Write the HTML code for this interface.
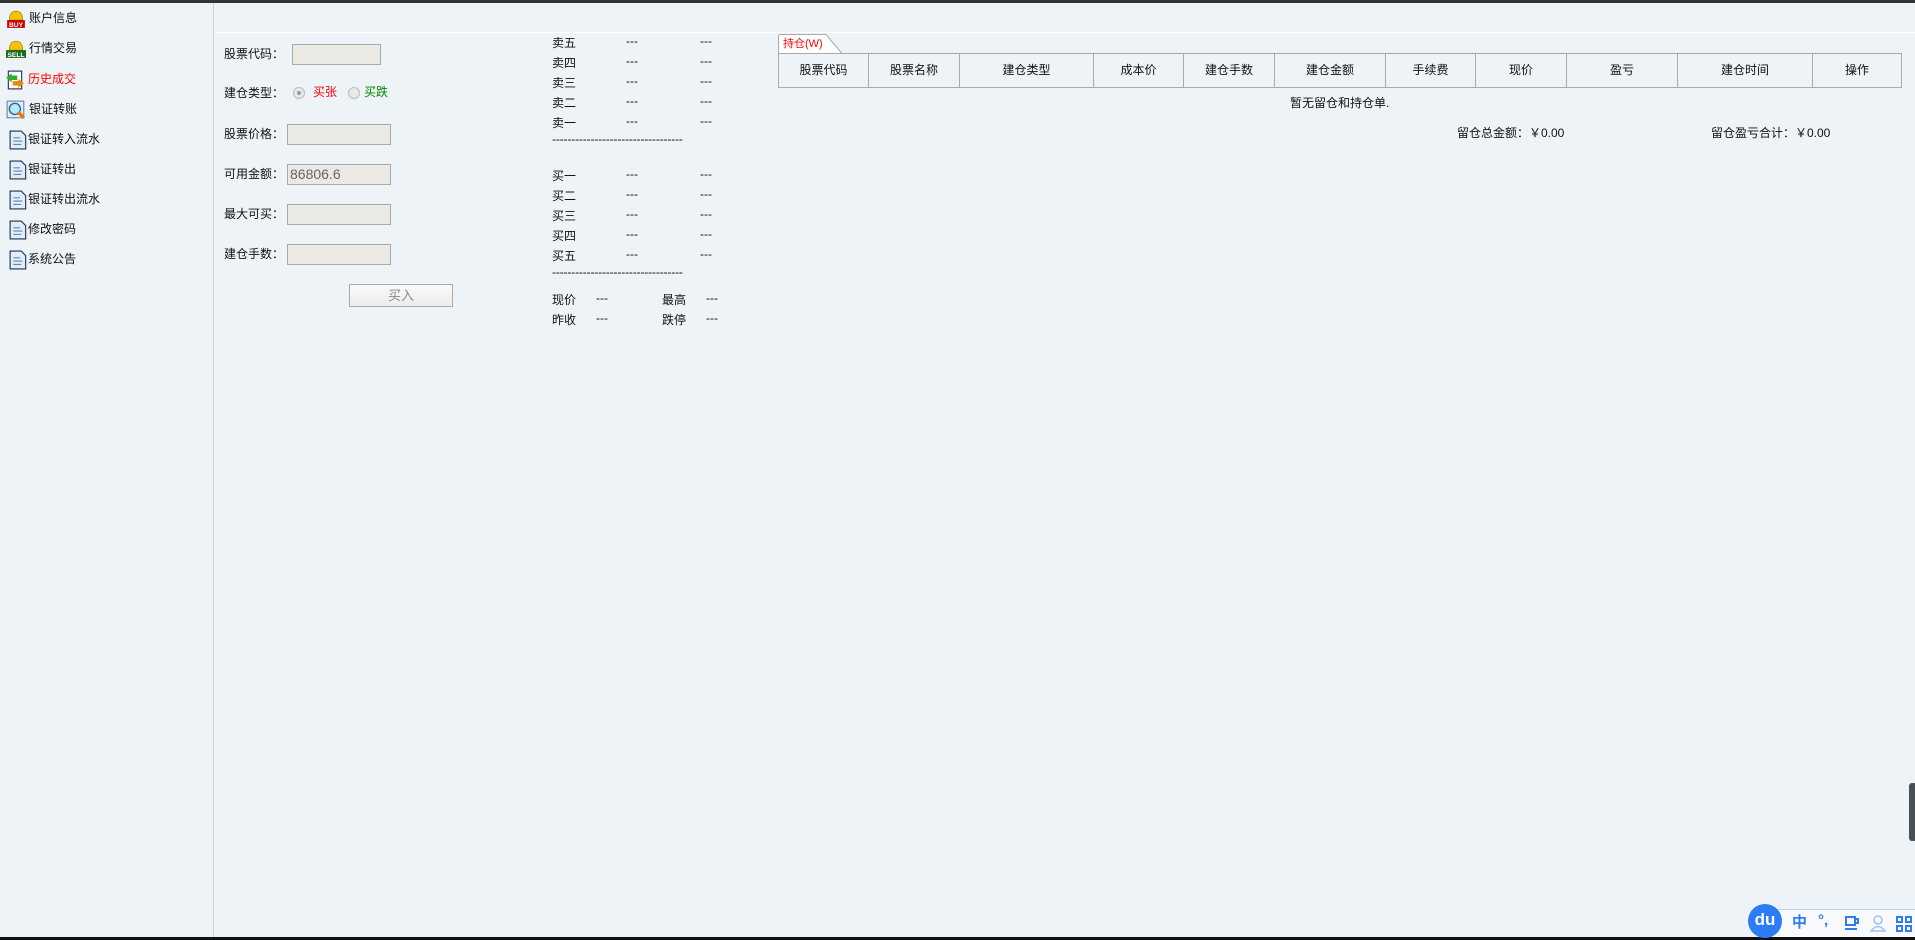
<!DOCTYPE html>
<html><head><meta charset="utf-8"><style>
*{margin:0;padding:0;box-sizing:border-box}
body{width:1915px;height:940px;background:#eef3f8;font-family:"Liberation Sans","Noto Sans CJK SC",sans-serif;font-size:12px;color:#111;position:relative;overflow:hidden}
.a{position:absolute;white-space:nowrap;line-height:14px}
.inp{position:absolute;background:#ebe9e4;border:1px solid #a9a9a9;height:21px;font-size:14px;color:#666;padding-left:2px;line-height:19px}
.th{position:absolute;top:53px;height:35px;border:1px solid #aaa;border-right:none;text-align:center;line-height:33px}
.ic{position:absolute;width:20px;height:20px}
</style></head><body>
<div class="a" style="left:0;top:0;width:1915px;height:3px;background:#333"></div>
<div class="a" style="left:0;top:937px;width:1915px;height:3px;background:#111"></div>
<div class="a" style="left:213px;top:3px;width:1px;height:934px;background:#cdd3da"></div>
<div class="a" style="left:214px;top:32px;width:1701px;height:1px;background:#fff"></div>

<!-- sidebar -->
<svg class="ic" style="left:6px;top:9px" viewBox="0 0 18 18"><path d="M3 10 Q3 2 9 2 Q15 2 15 10Z" fill="#f5c400" stroke="#a07800" stroke-width=".6"/><rect x="1" y="10" width="16" height="7" fill="#c00"/><text x="9" y="16" font-size="6" fill="#fff" text-anchor="middle" font-family="Liberation Sans" font-weight="bold">BUY</text></svg>
<div class="a" style="left:29px;top:11px">账户信息</div>
<svg class="ic" style="left:6px;top:39px" viewBox="0 0 18 18"><path d="M3 10 Q3 2 9 2 Q15 2 15 10Z" fill="#f5c400" stroke="#a07800" stroke-width=".6"/><rect x="0" y="10" width="18" height="7" fill="#1a6b1a"/><text x="9" y="16" font-size="6" fill="#fff" text-anchor="middle" font-family="Liberation Sans" font-weight="bold">SELL</text></svg>
<div class="a" style="left:29px;top:41px">行情交易</div>
<svg class="ic" style="left:5px;top:70px" viewBox="0 0 18 18"><rect x="3" y="1" width="12" height="16" fill="#fff" stroke="#235" /><path d="M1 7 L6 3 L6 5 L11 5 L11 9 L6 9 L6 11Z" fill="#3a3"/><path d="M17 12 L12 8 L12 10 L7 10 L7 14 L12 14 L12 16Z" fill="#e80"/></svg>
<div class="a" style="left:28px;top:72px;color:#f00">历史成交</div>
<svg class="ic" style="left:6px;top:100px" viewBox="0 0 18 18"><rect x="1" y="1" width="15" height="15" fill="#def" stroke="#68a"/><circle cx="8" cy="8" r="5" fill="#aef" stroke="#468" stroke-width="1.3"/><path d="M11 11 L16 16" stroke="#e70" stroke-width="3"/></svg>
<div class="a" style="left:29px;top:102px">银证转账</div>
<svg class="ic" style="left:9px;top:130px" viewBox="0 0 18 18"><path d="M1 1 H11 L15 5 V17 H1Z" fill="#dfeefc" stroke="#234"/><path d="M4 7h6M4 10h8M4 13h7" stroke="#68a"/></svg>
<div class="a" style="left:28px;top:132px">银证转入流水</div>
<svg class="ic" style="left:9px;top:160px" viewBox="0 0 18 18"><path d="M1 1 H11 L15 5 V17 H1Z" fill="#dfeefc" stroke="#234"/><path d="M4 7h6M4 10h8M4 13h7" stroke="#68a"/></svg>
<div class="a" style="left:28px;top:162px">银证转出</div>
<svg class="ic" style="left:9px;top:190px" viewBox="0 0 18 18"><path d="M1 1 H11 L15 5 V17 H1Z" fill="#dfeefc" stroke="#234"/><path d="M4 7h6M4 10h8M4 13h7" stroke="#68a"/></svg>
<div class="a" style="left:28px;top:192px">银证转出流水</div>
<svg class="ic" style="left:9px;top:220px" viewBox="0 0 18 18"><path d="M1 1 H11 L15 5 V17 H1Z" fill="#dfeefc" stroke="#234"/><path d="M4 7h6M4 10h8M4 13h7" stroke="#68a"/></svg>
<div class="a" style="left:28px;top:222px">修改密码</div>
<svg class="ic" style="left:9px;top:250px" viewBox="0 0 18 18"><path d="M1 1 H11 L15 5 V17 H1Z" fill="#dfeefc" stroke="#234"/><path d="M4 7h6M4 10h8M4 13h7" stroke="#68a"/></svg>
<div class="a" style="left:28px;top:252px">系统公告</div>

<!-- form -->
<div class="a" style="left:224px;top:47px">股票代码：</div>
<div class="inp" style="left:292px;top:44px;width:89px"></div>
<div class="a" style="left:224px;top:86px">建仓类型：</div>
<div class="a" style="left:293px;top:87px;width:12px;height:12px;border-radius:50%;border:1px solid #bbb;background:#e8e8e8"><div style="margin:3px;width:4px;height:4px;border-radius:50%;background:#999"></div></div>
<div class="a" style="left:313px;top:85px;color:#f00">买张</div>
<div class="a" style="left:348px;top:87px;width:12px;height:12px;border-radius:50%;border:1px solid #bbb;background:#e8e8e8"></div>
<div class="a" style="left:364px;top:85px;color:#080">买跌</div>
<div class="a" style="left:224px;top:127px">股票价格：</div>
<div class="inp" style="left:287px;top:124px;width:104px"></div>
<div class="a" style="left:224px;top:167px">可用金额：</div>
<div class="inp" style="left:287px;top:164px;width:104px">86806.6</div>
<div class="a" style="left:224px;top:207px">最大可买：</div>
<div class="inp" style="left:287px;top:204px;width:104px"></div>
<div class="a" style="left:224px;top:247px">建仓手数：</div>
<div class="inp" style="left:287px;top:244px;width:104px"></div>
<div class="a" style="left:349px;top:284px;width:104px;height:23px;border:1px solid #aaa;background:linear-gradient(#fafafa,#ececec);text-align:center;line-height:21px;color:#888;font-size:13px">买入</div>

<!-- order book -->
<div class="a" style="left:552px;top:33px;line-height:20px">卖五<br>卖四<br>卖三<br>卖二<br>卖一</div>
<div class="a" style="left:626px;top:31px;line-height:20px">---<br>---<br>---<br>---<br>---</div>
<div class="a" style="left:700px;top:31px;line-height:20px">---<br>---<br>---<br>---<br>---</div>
<div class="a" style="left:552px;top:132px;letter-spacing:-0.15px">----------------------------------</div>
<div class="a" style="left:552px;top:166px;line-height:20px">买一<br>买二<br>买三<br>买四<br>买五</div>
<div class="a" style="left:626px;top:164px;line-height:20px">---<br>---<br>---<br>---<br>---</div>
<div class="a" style="left:700px;top:164px;line-height:20px">---<br>---<br>---<br>---<br>---</div>
<div class="a" style="left:552px;top:265px;letter-spacing:-0.15px">----------------------------------</div>
<div class="a" style="left:552px;top:290px;line-height:20px">现价<br>昨收</div>
<div class="a" style="left:596px;top:288px;line-height:20px">---<br>---</div>
<div class="a" style="left:662px;top:290px;line-height:20px">最高<br>跌停</div>
<div class="a" style="left:706px;top:288px;line-height:20px">---<br>---</div>

<!-- table -->
<svg class="a" style="left:778px;top:34px" width="68" height="20"><path d="M0.5 20 V2.5 Q0.5 0.5 2.5 0.5 H48 L64 19.5" fill="#fff" stroke="#aaa"/></svg>
<div class="a" style="left:783px;top:37px;color:#f00;font-size:11px">持仓(W)</div>
<div class="th" style="left:778px;width:90px">股票代码</div>
<div class="th" style="left:868px;width:91px">股票名称</div>
<div class="th" style="left:959px;width:134px">建仓类型</div>
<div class="th" style="left:1093px;width:90px">成本价</div>
<div class="th" style="left:1183px;width:91px">建仓手数</div>
<div class="th" style="left:1274px;width:111px;">建仓金额</div>
<div class="th" style="left:1385px;width:90px">手续费</div>
<div class="th" style="left:1475px;width:91px">现价</div>
<div class="th" style="left:1566px;width:111px">盈亏</div>
<div class="th" style="left:1677px;width:135px">建仓时间</div>
<div class="th" style="left:1812px;width:90px;border-right:1px solid #aaa">操作</div>
<div class="a" style="left:1290px;top:96px">暂无留仓和持仓单.</div>
<div class="a" style="left:1457px;top:126px">留仓总金额：￥0.00</div>
<div class="a" style="left:1711px;top:126px">留仓盈亏合计：￥0.00</div>

<!-- right widget -->
<div class="a" style="left:1909px;top:783px;width:8px;height:58px;background:#4a5058;border-radius:3px"></div>
<!-- IME bar -->
<div class="a" style="left:1770px;top:909px;width:145px;height:28px;background:#f8fafd;border-top:1px solid #bcd3f5"></div>
<div class="a" style="left:1748px;top:904px;width:34px;height:34px;border-radius:50%;background:#2d7cf6;color:#fff;font-size:17px;text-align:center;line-height:32px;font-weight:bold">du</div>
<div class="a" style="left:1792px;top:915px;color:#2d7cf6;font-size:15px;font-weight:bold;line-height:16px">中</div>
<div class="a" style="left:1818px;top:913px;color:#2d7cf6;font-size:15px;font-weight:bold;line-height:16px">°,</div>
<svg class="a" style="left:1844px;top:915px" width="16" height="16"><path d="M2 2h9v8H2z M11 4h3v4h-3 M1 14h12" fill="none" stroke="#2d7cf6" stroke-width="2"/></svg>
<svg class="a" style="left:1870px;top:914px" width="16" height="18"><circle cx="8" cy="6" r="4" fill="none" stroke="#9cc2f8" stroke-width="1.5"/><path d="M1 17 Q8 8 15 17Z" fill="none" stroke="#9cc2f8" stroke-width="1.5"/></svg>
<svg class="a" style="left:1896px;top:916px" width="16" height="16"><g fill="none" stroke="#2d7cf6" stroke-width="2"><rect x="1" y="1" width="5" height="5"/><rect x="10" y="1" width="5" height="5"/><rect x="1" y="10" width="5" height="5"/><rect x="10" y="10" width="5" height="5"/></g></svg>
</body></html>
